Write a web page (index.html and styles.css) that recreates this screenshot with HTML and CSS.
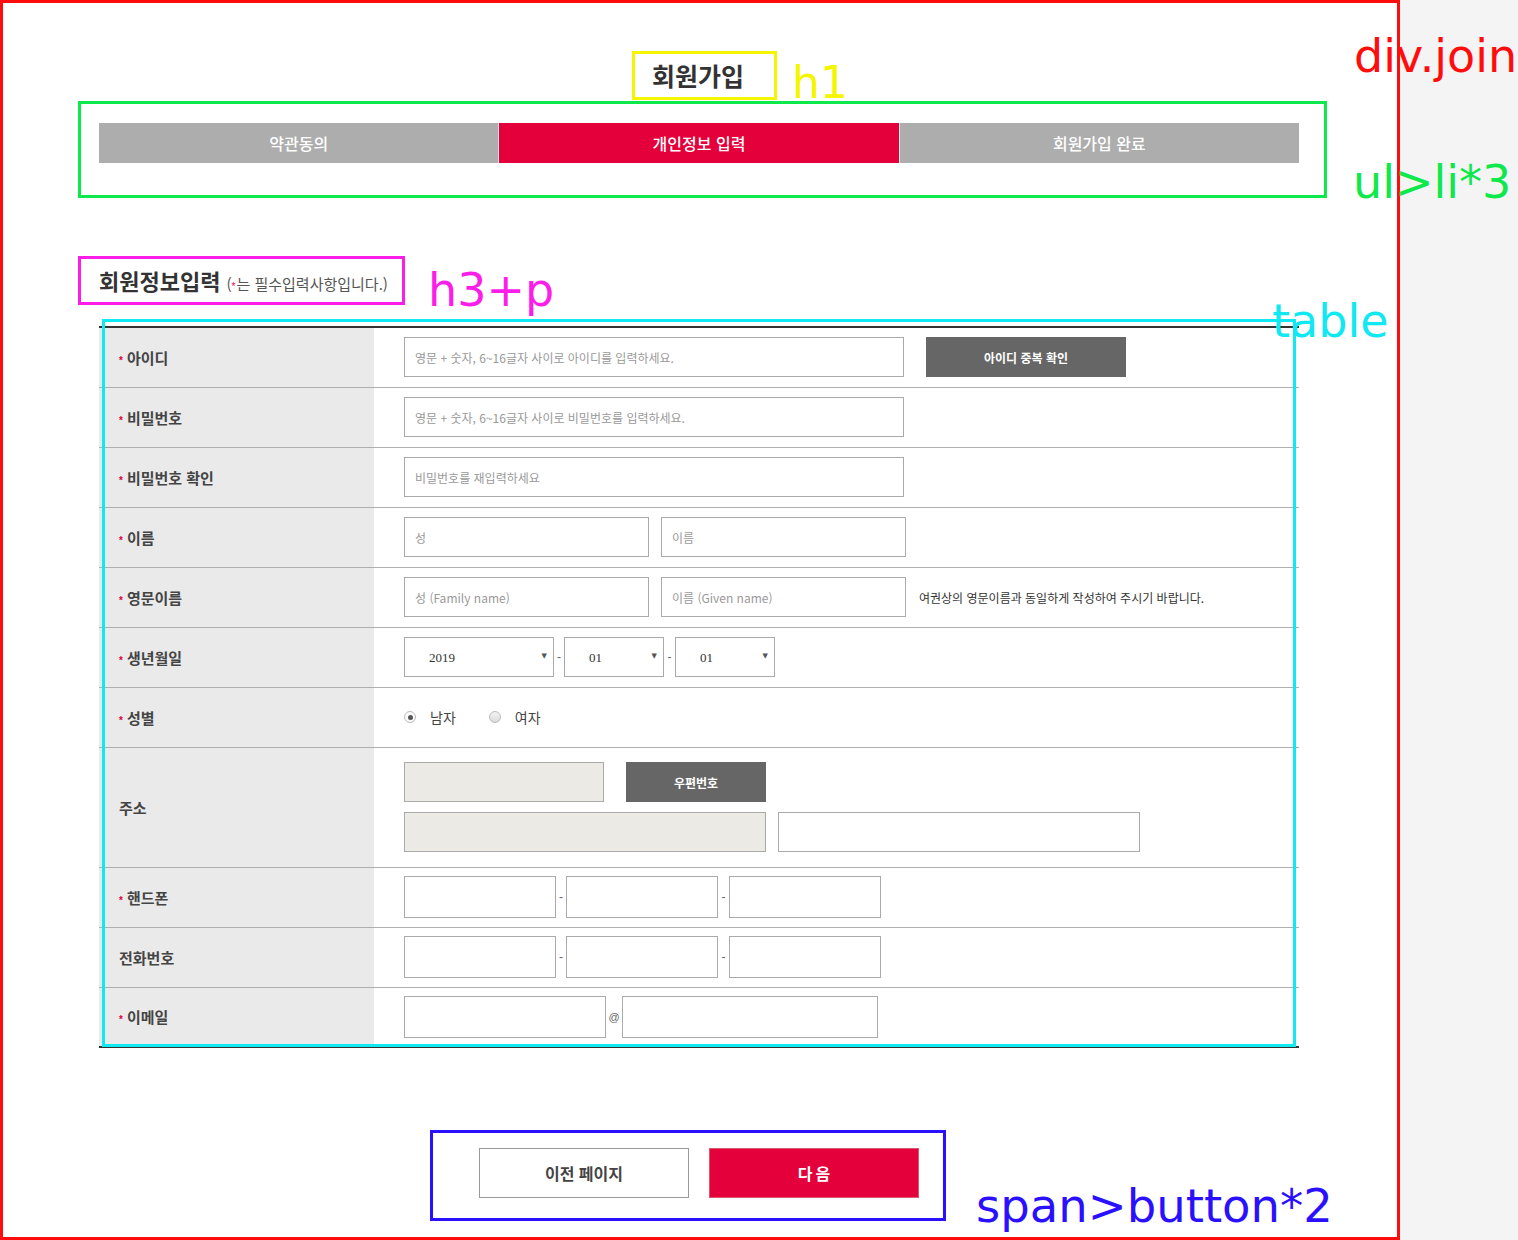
FILE: index.html
```html
<!DOCTYPE html>
<html lang="ko">
<head>
<meta charset="utf-8">
<title>회원가입</title>
<link rel="stylesheet" href="styles.css">
</head>
<body>
<div class="join">
  <h1 class="title">회원가입</h1>

  <ul class="steps">
    <li>약관동의</li>
    <li class="on">개인정보 입력</li>
    <li>회원가입 완료</li>
  </ul>

  <div class="sub-head">
    <h3>회원정보입력</h3>
    <p>(<em class="req">*</em>는 필수입력사항입니다.)</p>
  </div>

  <table class="form">
    <colgroup><col class="c-label"><col></colgroup>
    <tbody>
      <tr>
        <th><em class="req">*</em>아이디</th>
        <td><div class="field"><input class="ipt w500" type="text" placeholder="영문 + 숫자, 6~16글자 사이로 아이디를 입력하세요."><button class="btn-dark w200 ml22" type="button">아이디 중복 확인</button></div></td>
      </tr>
      <tr>
        <th><em class="req">*</em>비밀번호</th>
        <td><div class="field"><input class="ipt w500" type="password" placeholder="영문 + 숫자, 6~16글자 사이로 비밀번호를 입력하세요."></div></td>
      </tr>
      <tr>
        <th><em class="req">*</em>비밀번호 확인</th>
        <td><div class="field"><input class="ipt w500" type="password" placeholder="비밀번호를 재입력하세요"></div></td>
      </tr>
      <tr>
        <th><em class="req">*</em>이름</th>
        <td><div class="field"><input class="ipt w245" type="text" placeholder="성"><input class="ipt w245 ml12" type="text" placeholder="이름"></div></td>
      </tr>
      <tr>
        <th><em class="req">*</em>영문이름</th>
        <td><div class="field"><input class="ipt w245" type="text" placeholder="성 (Family name)"><input class="ipt w245 ml12" type="text" placeholder="이름 (Given name)"><span class="hint">여권상의 영문이름과 동일하게 작성하여 주시기 바랍니다.</span></div></td>
      </tr>
      <tr>
        <th><em class="req">*</em>생년월일</th>
        <td><div class="field">
          <span class="sel w150"><select><option>2019</option></select></span>
          <span class="sep">-</span>
          <span class="sel w100"><select><option>01</option></select></span>
          <span class="sep s11">-</span>
          <span class="sel w100"><select><option>01</option></select></span>
        </div></td>
      </tr>
      <tr>
        <th><em class="req">*</em>성별</th>
        <td><div class="field">
          <label class="radio"><span class="dot on"></span>남자</label>
          <label class="radio r2"><span class="dot"></span>여자</label>
        </div></td>
      </tr>
      <tr class="addr">
        <th>주소</th>
        <td>
          <div class="field"><input class="ipt w200 dim" type="text"><button class="btn-dark w140 ml22" type="button">우편번호</button></div>
          <div class="field mt10"><input class="ipt w362 dim" type="text"><input class="ipt w362 ml12" type="text"></div>
        </td>
      </tr>
      <tr>
        <th><em class="req">*</em>핸드폰</th>
        <td><div class="field"><input class="ipt w152 h42" type="text"><span class="sep">-</span><input class="ipt w152 h42" type="text"><span class="sep s11">-</span><input class="ipt w152 h42" type="text"></div></td>
      </tr>
      <tr>
        <th>전화번호</th>
        <td><div class="field"><input class="ipt w152 h42" type="text"><span class="sep">-</span><input class="ipt w152 h42" type="text"><span class="sep s11">-</span><input class="ipt w152 h42" type="text"></div></td>
      </tr>
      <tr class="last">
        <th><em class="req">*</em>이메일</th>
        <td><div class="field"><input class="ipt w202 h42" type="text"><span class="at">@</span><input class="ipt w256 h42" type="text"></div></td>
      </tr>
    </tbody>
  </table>

  <div class="btn-area">
    <span class="btns"><button class="btn-prev" type="button">이전 페이지</button><button class="btn-next" type="button">다음</button></span>
  </div>

  <div class="frame-table"></div>
  <span class="tag tag-join">div.join</span>
  <span class="tag tag-h1">h1</span>
  <span class="tag tag-ul">ul&gt;li*3</span>
  <span class="tag tag-h3">h3+p</span>
  <span class="tag tag-table">table</span>
  <span class="tag tag-btn">span&gt;button*2</span>
</div>
</body>
</html>
```

FILE: styles.css
```css
html, body {
  margin: 0;
  padding: 0;
  overflow: hidden;
}

body {
  width: 1518px;
  height: 1240px;
  background: #f4f4f4;
  font-family: "Noto Sans CJK KR", "Noto Sans", sans-serif;
  color: #333;
}

.join {
  position: relative;
  box-sizing: border-box;
  width: 1400px;
  height: 1240px;
  padding-top: 48px;
  border: 3px solid #ff0d0d;
  background: #fff;
}

/* h1 */
.title {
  box-sizing: border-box;
  width: 145px;
  height: 49px;
  margin: 0 0 0 629px;
  padding-left: 17px;
  border: 3px solid #f5f500;
  font-size: 25px;
  font-weight: 700;
  line-height: 43px;
  color: #333;
}

/* steps */
.steps {
  box-sizing: border-box;
  display: flex;
  width: 1249px;
  height: 97px;
  margin: 1px 0 0 75px;
  padding: 19px 25px 32px 18px;
  border: 3px solid #0de84a;
  list-style: none;
}

.steps li {
  flex: 1 1 0;
  height: 40px;
  line-height: 40px;
  text-align: center;
  font-size: 16px;
  font-weight: 500;
  color: #fff;
  background: #adadad;
}

.steps li + li {
  border-left: 1px solid #ececec;
}

.steps li.on {
  background: #e4003a;
}

/* sub heading */
.sub-head {
  box-sizing: border-box;
  display: flex;
  align-items: baseline;
  width: 327px;
  height: 49px;
  margin: 58px 0 0 75px;
  padding-left: 18px;
  border: 3px solid #fc1ee8;
}

.sub-head h3 {
  margin: 0;
  font-size: 22px;
  font-weight: 700;
  line-height: 43px;
  color: #333;
}

.sub-head p {
  margin: 0 0 0 6px;
  font-size: 15px;
  color: #555;
}

.req {
  font-style: normal;
  font-family: "Liberation Sans", sans-serif;
  font-size: 10px;
  color: #e4003a;
  margin-right: 4px;
}

.sub-head .req {
  margin-right: 1px;
}

/* table */
.form {
  table-layout: fixed;
  width: 1200px;
  margin: 21px 0 0 96px;
  border-collapse: separate;
  border-spacing: 0;
  border-top: 2px solid #333;
  border-bottom: 2px solid #333;
}

.c-label {
  width: 275px;
}

.form th,
.form td {
  box-sizing: border-box;
  height: 60px;
  padding: 0 0 1px 0;
  border-bottom: 1px solid #b0b0b0;
  vertical-align: middle;
}

.form th {
  padding-left: 20px;
  background: #eaeaea;
  text-align: left;
  font-size: 15px;
  font-weight: 700;
  color: #444;
}

.form td {
  padding-left: 30px;
}

.form tr.addr th,
.form tr.addr td {
  height: 120px;
}

.form tr.last th,
.form tr.last td {
  height: 58px;
  border-bottom: 0;
}

.field {
  display: flex;
  align-items: center;
}

.ipt {
  box-sizing: border-box;
  height: 40px;
  margin: 0;
  padding: 0 10px;
  border: 1px solid #aaa;
  border-radius: 0;
  background: #fff;
  font-family: "Noto Sans CJK KR", "Noto Sans", sans-serif;
  font-size: 12px;
  color: #333;
  outline: none;
}

.ipt::placeholder {
  color: #999;
}

.ipt.dim { background: #ebeae4; }
.ipt.h42 { height: 42px; }

.w500 { width: 500px; }
.w245 { width: 245px; }
.w200 { width: 200px; }
.w202 { width: 202px; }
.w256 { width: 256px; }
.w362 { width: 362px; }
.w152 { width: 152px; }
.w140 { width: 140px; }
.w150 { width: 150px; }
.w100 { width: 100px; }

.btn-dark {
  height: 40px;
  margin: 0;
  padding: 0;
  border: 0;
  background: #666;
  font-family: "Noto Sans CJK KR", "Noto Sans", sans-serif;
  font-size: 12px;
  font-weight: 700;
  color: #fff;
}

.field .mt10,
.field.mt10 { margin-top: 10px; }
.field .ml12 { margin-left: 12px; }
.field .ml22 { margin-left: 22px; }

.hint {
  margin-left: 13px;
  font-size: 12px;
  color: #333;
}

.sep {
  width: 10px;
  text-align: center;
  font-family: "Liberation Sans", sans-serif;
  font-size: 12px;
  color: #666;
}

.sep.s11 { width: 11px; }

.at {
  width: 16px;
  text-align: center;
  font-family: "Liberation Sans", sans-serif;
  font-size: 11px;
  color: #666;
}

/* select */
.sel {
  position: relative;
  display: block;
  height: 40px;
}

.sel select {
  box-sizing: border-box;
  width: 100%;
  height: 40px;
  margin: 0;
  padding: 0 0 0 24px;
  border: 1px solid #aaa;
  border-radius: 0;
  background: #fff;
  font-family: "Liberation Serif", serif;
  font-size: 13px;
  color: #333;
  appearance: none;
  -webkit-appearance: none;
  outline: none;
}

.sel::after {
  content: "\25BC";
  position: absolute;
  right: 7px;
  top: 14px;
  font-family: "DejaVu Sans", sans-serif;
  font-size: 7px;
  line-height: 10px;
  color: #555;
  pointer-events: none;
}

/* radio */
.radio {
  display: inline-flex;
  align-items: center;
  font-size: 14px;
  color: #444;
}

.radio.r2 {
  margin-left: 33px;
}

.dot {
  box-sizing: border-box;
  position: relative;
  width: 12px;
  height: 12px;
  margin-right: 14px;
  border: 1px solid #bcbcbc;
  border-radius: 50%;
  background: linear-gradient(#f4f4f4, #dcdcdc);
}

.dot.on {
  background: #fafafa;
}

.dot.on::after {
  content: "";
  position: absolute;
  left: 2.5px;
  top: 2.5px;
  width: 5px;
  height: 5px;
  border-radius: 50%;
  background: #555;
}

/* bottom buttons */
.btn-area {
  margin: 82px 0 0 427px;
}

.btns {
  display: inline-flex;
  gap: 20px;
  padding: 15px 24px 20px 46px;
  border: 3px solid #2a10ff;
}

.btns button {
  box-sizing: border-box;
  width: 210px;
  height: 50px;
  margin: 0;
  padding: 0;
  font-family: "Noto Sans CJK KR", "Noto Sans", sans-serif;
  font-size: 16px;
  font-weight: 700;
}

.btn-prev {
  border: 1px solid #999;
  background: #fff;
  color: #444;
}

.btn-next {
  border: 1px solid #d9566f;
  background: #e4003a;
  color: #fff;
  letter-spacing: 3px;
  text-indent: 3px;
}

/* annotation overlays */
.frame-table {
  position: absolute;
  left: 99px;
  top: 316px;
  box-sizing: border-box;
  width: 1194px;
  height: 728px;
  border: 3px solid #10e8f2;
  pointer-events: none;
}

.tag {
  position: absolute;
  font-family: "DejaVu Sans", sans-serif;
  font-size: 46px;
  line-height: 46px;
  white-space: nowrap;
  pointer-events: none;
}

.tag-join { left: 1351px; top: 30px; color: #ff0d0d; }
.tag-h1 { left: 789px; top: 57px; color: #f5f500; font-size: 44px; }
.tag-ul { left: 1350px; top: 156px; color: #0de84a; }
.tag-h3 { left: 425px; top: 264px; color: #fc1ee8; }
.tag-table { left: 1269px; top: 295px; color: #10e8f2; }
.tag-btn { left: 973px; top: 1180px; color: #2a10ff; font-size: 46.5px; }
```
